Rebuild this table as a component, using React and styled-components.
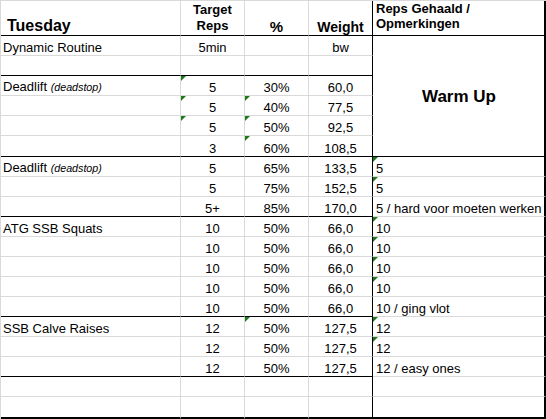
import React from "react";
import styled, { createGlobalStyle, css } from "styled-components";

const GRID = "#d9d9d9";
const FLAG = "#1c7a1c";

const GlobalStyle = createGlobalStyle`
  html, body {
    margin: 0;
    padding: 0;
    background: #fff;
  }
  body {
    font-family: "Liberation Sans", Arial, sans-serif;
  }
`;

const Sheet = styled.div`
  display: grid;
  grid-template-columns: 180px 64px 64px 64px 173px;
  grid-template-rows: 35px repeat(5, 20px) 21px repeat(12, 20px) 22px;
  width: 546px;
  box-sizing: border-box;
  border-top: 1px solid ${GRID};
  border-left: 1px solid ${GRID};
  color: #000;
  font-family: "Liberation Sans", Arial, sans-serif;
  font-size: 13px;
  line-height: 15px;
`;

const bottomLine = {
  gray: `1px solid ${GRID}`,
  black: "1px solid #000",
  thick: "2px solid #000",
};

const Cell = styled.div`
  position: relative;
  box-sizing: border-box;
  display: flex;
  align-items: flex-end;
  justify-content: ${(p) => (p.$center ? "center" : "flex-start")};
  padding: 0 2px;
  border-right: 1px solid ${(p) => (p.$edge ? "#000" : GRID)};
  border-bottom: ${(p) => bottomLine[p.$bottom || "gray"]};
  white-space: nowrap;
  ${(p) =>
    p.$flag &&
    css`
      &::before {
        content: "";
        position: absolute;
        top: 0;
        left: 0;
        border-top: 5px solid ${FLAG};
        border-right: 5px solid transparent;
      }
    `}
`;

const NoteCell = styled(Cell)`
  padding-left: 3px;
  border-right: 2px solid #000;
`;

const HeadCell = styled(Cell)`
  font-weight: bold;
  font-size: ${(p) => p.$size || 13}px;
  line-height: ${(p) => p.$lh || 16}px;
  padding-bottom: ${(p) => p.$pb || 0}px;
  padding-left: ${(p) => p.$pl || 2}px;
  border-bottom: 1px solid #000;
  text-align: center;
`;

const HeadNote = styled(NoteCell)`
  align-items: flex-start;
  font-weight: bold;
  line-height: 15px;
  border-bottom: 1px solid #000;
`;

const WarmUp = styled(NoteCell)`
  grid-row: span 6;
  align-items: center;
  justify-content: center;
  font-size: 17px;
  font-weight: bold;
  border-bottom: 1px solid #000;
`;

const Note = styled.i`
  font-size: 10.7px;
`;

const rows = [
  { a: "Dynamic Routine", b: "5min", d: "bw" },
  { end: true },
  { a: "Deadlift", note: true, b: "5", bf: 1, c: "30%", d: "60,0" },
  { b: "5", bf: 1, c: "40%", cf: 1, d: "77,5" },
  { b: "5", bf: 1, c: "50%", cf: 1, d: "92,5" },
  { b: "3", c: "60%", cf: 1, d: "108,5", end: true },
  { a: "Deadlift", note: true, b: "5", c: "65%", d: "133,5", e: "5", ef: 1 },
  { b: "5", c: "75%", d: "152,5", e: "5", ef: 1 },
  { b: "5+", c: "85%", d: "170,0", e: "5 / hard voor moeten werken", end: true },
  { a: "ATG SSB Squats", b: "10", c: "50%", d: "66,0", e: "10", ef: 1 },
  { b: "10", c: "50%", d: "66,0", e: "10", ef: 1 },
  { b: "10", c: "50%", d: "66,0", e: "10", ef: 1 },
  { b: "10", c: "50%", d: "66,0", e: "10", ef: 1 },
  { b: "10", c: "50%", d: "66,0", e: "10 / ging vlot", end: true },
  { a: "SSB Calve Raises", b: "12", c: "50%", cf: 1, d: "127,5", e: "12", ef: 1 },
  { b: "12", c: "50%", d: "127,5", e: "12", ef: 1 },
  { b: "12", c: "50%", d: "127,5", e: "12 / easy ones", end: true },
  {},
  { last: true },
];

const MERGED_ROWS = 6;

export default function App() {
  return (
    <>
      <GlobalStyle />
      <Sheet>
        <HeadCell $size={16} $lh={18} $pl={6}>
          Tuesday
        </HeadCell>
        <HeadCell $center $pb={1}>
          Target
          <br />
          Reps
        </HeadCell>
        <HeadCell $center $size={15} $lh={17}>
          %
        </HeadCell>
        <HeadCell $center $size={14} $edge>
          Weight
        </HeadCell>
        <HeadNote>
          Reps Gehaald /
          <br />
          Opmerkingen
        </HeadNote>

        {rows.map((r, i) => {
          const line = r.last ? "thick" : r.end ? "black" : "gray";
          const noteLine = r.last ? "thick" : "gray";
          return (
            <React.Fragment key={i}>
              <Cell $bottom={line}>
                <span>
                  {r.a}
                  {r.note && (
                    <>
                      {" "}
                      <Note>(deadstop)</Note>
                    </>
                  )}
                </span>
              </Cell>
              <Cell $center $flag={r.bf} $bottom={line}>
                {r.b}
              </Cell>
              <Cell $center $flag={r.cf} $bottom={line}>
                {r.c}
              </Cell>
              <Cell $center $edge $bottom={line}>
                {r.d}
              </Cell>
              {i === 0 && <WarmUp>Warm Up</WarmUp>}
              {i >= MERGED_ROWS && (
                <NoteCell $flag={r.ef} $bottom={noteLine}>
                  {r.e}
                </NoteCell>
              )}
            </React.Fragment>
          );
        })}
      </Sheet>
    </>
  );
}
